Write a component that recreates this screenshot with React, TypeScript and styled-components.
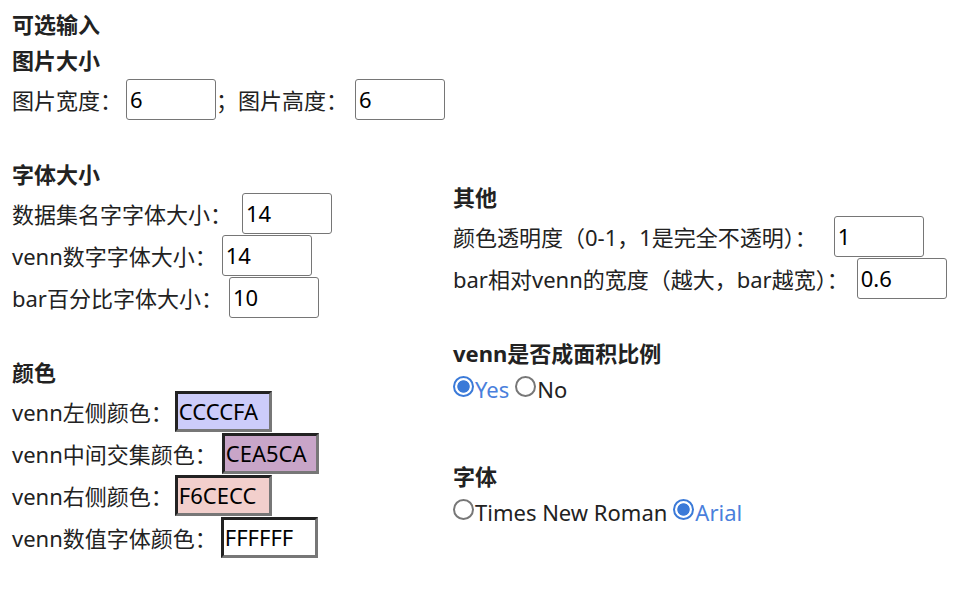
import React, { useState } from "react";
import styled, { createGlobalStyle } from "styled-components";

const Global = createGlobalStyle`
  html, body { margin: 0; padding: 0; background: #fff; }
  body {
    font-family: "Noto Sans", "Noto Sans CJK SC", sans-serif;
    font-size: 22px;
    color: #222;
  }
  * { box-sizing: border-box; }
`;

const Page = styled.div`
  padding: 6px 0 0 12px;
  width: 980px;
  height: 598px;
  overflow: hidden;
`;

const Heading = styled.div<{ $top?: number }>`
  height: 36px;
  line-height: 36px;
  font-weight: 700;
  margin-top: ${(p) => p.$top ?? 0}px;
  white-space: nowrap;
`;

const Row = styled.div`
  height: 42px;
  display: flex;
  align-items: center;
  white-space: nowrap;
`;

const Label = styled.span<{ $gap?: number }>`
  margin-right: ${(p) => p.$gap ?? 4}px;
`;

const NumInput = styled.input`
  width: 90px;
  height: 41px;
  border: 1px solid #767676;
  border-radius: 3px;
  padding: 1px 3px;
  font: inherit;
  color: #000;
  background: #fff;
  outline: none;
`;

const ColorBox = styled.input<{ $bg: string }>`
  width: 97px;
  height: 41px;
  border-style: solid;
  border-width: 3px;
  border-color: #222 #777 #777 #222;
  background: ${(p) => p.$bg};
  padding: 0 1px;
  font: inherit;
  color: #000;
  outline: none;
`;

const Columns = styled.div`
  display: flex;
  margin-top: 36px;
`;

const LeftCol = styled.div`
  width: 441px;
  flex: none;
`;

const RightCol = styled.div`
  padding-top: 23px;
  flex: 1;
`;

const RadioRow = styled.div`
  height: 36px;
  display: flex;
  align-items: center;
  white-space: nowrap;
`;

const RadioLabel = styled.label<{ $on: boolean }>`
  display: inline-flex;
  align-items: center;
  color: ${(p) => (p.$on ? "#4a7fdc" : "#222")};
  margin-right: 6px;
  cursor: pointer;
`;

const Radio = styled.input`
  appearance: none;
  width: 21px;
  height: 21px;
  margin: 0 1px 0 0;
  border-radius: 50%;
  border: 2px solid #777;
  background: #fff;
  position: relative;
  top: -3px;
  &:checked {
    border-color: #3b7ad8;
    background: radial-gradient(circle, #3b7ad8 0 5.8px, #fff 6.6px);
  }
`;

export default function App() {
  const [area, setArea] = useState("yes");
  const [font, setFont] = useState("arial");
  return (
    <>
      <Global />
      <Page>
        <Heading>可选输入</Heading>
        <Heading>图片大小</Heading>
        <Row>
          <Label $gap={4}>图片宽度：</Label>
          <NumInput defaultValue="6" />
          <Label $gap={7}>；图片高度：</Label>
          <NumInput defaultValue="6" />
        </Row>
        <Columns>
          <LeftCol>
            <Heading>字体大小</Heading>
            <Row>
              <Label $gap={10}>数据集名字字体大小：</Label>
              <NumInput defaultValue="14" />
            </Row>
            <Row>
              <Label $gap={5}>venn数字字体大小：</Label>
              <NumInput defaultValue="14" />
            </Row>
            <Row>
              <Label $gap={6}>bar百分比字体大小：</Label>
              <NumInput defaultValue="10" />
            </Row>
            <Heading $top={36}>颜色</Heading>
            <Row>
              <Label $gap={2}>venn左侧颜色：</Label>
              <ColorBox $bg="#CCCCFA" defaultValue="CCCCFA" />
            </Row>
            <Row>
              <Label $gap={5}>venn中间交集颜色：</Label>
              <ColorBox $bg="#C8A5C8" defaultValue="CEA5CA" />
            </Row>
            <Row>
              <Label $gap={2}>venn右侧颜色：</Label>
              <ColorBox $bg="#F2CFCC" defaultValue="F6CECC" />
            </Row>
            <Row>
              <Label $gap={4}>venn数值字体颜色：</Label>
              <ColorBox $bg="#FFFFFF" defaultValue="FFFFFF" />
            </Row>
          </LeftCol>
          <RightCol>
            <Heading>其他</Heading>
            <Row>
              <Label $gap={17}>颜色透明度（0-1，1是完全不透明）：</Label>
              <NumInput defaultValue="1" />
            </Row>
            <Row>
              <Label $gap={8}>bar相对venn的宽度（越大，bar越宽）：</Label>
              <NumInput defaultValue="0.6" />
            </Row>
            <Heading $top={36}>venn是否成面积比例</Heading>
            <RadioRow>
              <RadioLabel $on={area === "yes"}>
                <Radio type="radio" name="area" checked={area === "yes"} onChange={() => setArea("yes")} />
                Yes
              </RadioLabel>
              <RadioLabel $on={area === "no"}>
                <Radio type="radio" name="area" checked={area === "no"} onChange={() => setArea("no")} />
                No
              </RadioLabel>
            </RadioRow>
            <Heading $top={51}>字体</Heading>
            <RadioRow>
              <RadioLabel $on={font === "times"}>
                <Radio type="radio" name="font" checked={font === "times"} onChange={() => setFont("times")} />
                Times New Roman
              </RadioLabel>
              <RadioLabel $on={font === "arial"}>
                <Radio type="radio" name="font" checked={font === "arial"} onChange={() => setFont("arial")} />
                Arial
              </RadioLabel>
            </RadioRow>
          </RightCol>
        </Columns>
      </Page>
    </>
  );
}
